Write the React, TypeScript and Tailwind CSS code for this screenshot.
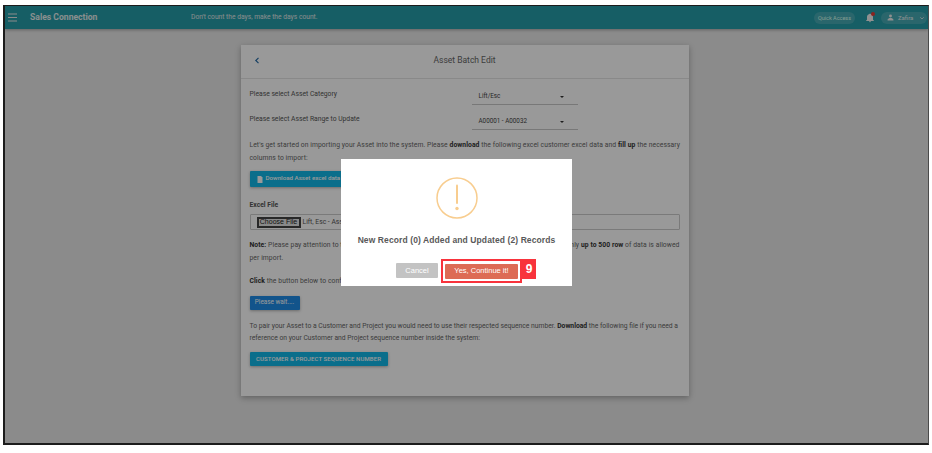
import React from "react";

function Caret() {
  return <span className="w-0 h-0 border-l-[2.5px] border-r-[2.5px] border-t-[2.5px] border-l-transparent border-r-transparent border-t-[#333]" />;
}

function SelectRow({ label, value }: { label: string; value: string }) {
  return (
    <div className="flex items-center h-[25px]">
      <div className="w-[222px] pt-[4px] text-[#555] text-[6.75px]">{label}</div>
      <div className="w-[106px] h-[25px] border-b border-[#c8c8c8] flex items-center justify-between pt-[9px] pl-[7px] pr-[14px] text-[6.3px] text-[#444]">
        <span>{value}</span>
        <Caret />
      </div>
    </div>
  );
}

export default function App() {
  return (
    <div className="w-[932px] h-[453px] bg-white pt-[5px] pl-[3px] font-['Roboto',sans-serif] overflow-hidden">
      <div className="relative w-[926px] h-[440px] border border-b-2 border-l-2 border-[#1c1c1c] border-r-[#4a4a4a] bg-[#e8e8e8] overflow-hidden flex flex-col">
        <header className="h-[23px] shrink-0 bg-[#269da8] flex items-center text-white shadow-[0_1px_3px_rgba(0,0,0,0.3)]">
          <svg width="11" height="9" viewBox="0 0 11 9" className="ml-[2px]" fill="none" stroke="#e8e8e8" strokeWidth="1">
            <path d="M1 1h9M1 4.500h9M1 8h9" />
          </svg>
          <span className="ml-[12px] text-[8.6px] font-bold text-[#e4eeee] w-[161px]">Sales Connection</span>
          <span className="text-[6.7px] text-[#e0eaea]">Don't count the days, make the days count.</span>
          <div className="ml-auto flex items-center pr-[1px]">
            <span className="h-[12px] px-[4px] rounded-full bg-white/15 text-[5.5px] leading-[12px] text-[#dfe]">Quick Access</span>
            <span className="relative ml-[11px] w-[8px] h-[10px]">
              <svg width="8" height="10" viewBox="0 0 24 28" fill="#f2f2f2"><path d="M12 27a3 3 0 0 0 3-3H9a3 3 0 0 0 3 3zM21 19v-8c0-4.500-3-8-7-9V1h-4v1c-4 1-7 4.500-7 9v8l-3 3v1h24v-1z" /></svg>
              <span className="absolute -top-[1px] right-[-1px] w-[4px] h-[4px] rounded-full bg-[#e53935]" />
            </span>
            <div className="ml-[7px] h-[12px] w-[46px] rounded-full bg-white/15 flex items-center pl-[6px] gap-[4px] text-[6px] text-[#e4eeee]">
              <svg width="7" height="7" viewBox="0 0 24 24" fill="#f0f0f0"><path d="M12 12a5 5 0 1 0 0-10 5 5 0 0 0 0 10zm0 2c-4 0-10 2-10 6v2h20v-2c0-4-6-6-10-6z" /></svg>
              <span>Zafira</span>
              <svg width="6" height="6" viewBox="0 0 24 24" fill="none" stroke="#f0f0f0" strokeWidth="3" className="ml-[2px]"><path d="M5 9l7 7 7-7" /></svg>
            </div>
          </div>
        </header>

        <main className="flex-1 flex justify-center items-start pt-[16px] pr-[4px]">
          <div className="w-[448px] h-[351px] bg-white shadow-[0_2px_6px_rgba(0,0,0,0.3)]">
            <div className="h-[34px] border-b border-[#e4e4e4] flex items-start">
              <svg width="6" height="7" viewBox="0 0 6 7" fill="none" stroke="#2a6ea8" strokeWidth="1.2" className="mt-[12px] ml-[13px]"><path d="M4.500 0.800L1.800 3.500L4.500 6.200" /></svg>
              <div className="flex-1 pr-[19px] text-center text-[8.5px] text-[#666] mt-[9px]">Asset Batch Edit</div>
            </div>

            <div className="pl-[9px] pr-[9px]">
              <div className="pt-[1px]"><SelectRow label="Please select Asset Category" value="Lift/Esc" /></div>
              <SelectRow label="Please select Asset Range to Update" value="A00001 - A00032" />

              <p className="mt-[9px] text-[6.75px] leading-[12.5px] text-[#666] tracking-[0.08px] whitespace-nowrap">
                Let's get started on importing your Asset into the system. Please <b className="text-[#333]">download</b> the following excel customer excel data and <b className="text-[#333]">fill up</b> the necessary<br />columns to import:
              </p>

              <div className="mt-[7px] w-[150px] h-[16px] bg-[#12b8e8] rounded-[1px] text-white text-[6.2px] font-medium flex items-center pl-[7px] gap-[3px] shadow-[0_1px_3px_rgba(0,0,0,0.3)]">
                <svg width="6" height="7" viewBox="0 0 12 14" fill="#fff"><path d="M1 0h7l3 3v11H1z" /></svg>
                <span>Download Asset excel data</span>
              </div>

              <div className="mt-[13px] text-[6.75px] leading-[10px] font-bold text-[#555]">Excel File</div>
              <div className="mt-[4px] h-[16px] w-[430px] border border-[#ccc] rounded-[1px] flex items-center pl-[6px] text-[6.75px] text-[#555]">
                <span className="h-[11px] w-[44px] border-2 border-[#444] bg-[#e4e4e4] text-[#222] text-[7px] whitespace-nowrap font-['Liberation_Sans',sans-serif] flex items-center justify-center">Choose File</span>
                <span className="ml-[2px]">Lift, Esc - Asset Batch Edit.xlsx</span>
              </div>

              <p className="mt-[9px] text-[6.75px] leading-[12.5px] text-[#666] tracking-[0.08px]">
                <span className="flex justify-between">
                  <span><b className="text-[#333]">Note:</b> Please pay attention to the</span>
                  <span>only <b className="text-[#333]">up to 500 row</b> of data is allowed</span>
                </span>
                <span className="block">per import.</span>
              </p>

              <p className="mt-[11px] text-[6.75px] leading-[12.5px] text-[#666] tracking-[0.08px]">
                <b className="text-[#333]">Click</b> the button below to confirm the import of your Asset data.
              </p>

              <div className="mt-[8px] w-[50px] h-[14px] bg-[#1e8ce8] rounded-[1px] text-white text-[6.4px] flex items-center justify-center shadow-[0_1px_3px_rgba(0,0,0,0.3)]">Please wait....</div>

              <p className="mt-[10px] text-[6.75px] leading-[12.5px] text-[#666] whitespace-nowrap">
                To pair your Asset to a Customer and Project you would need to use their respected sequence number. <b className="text-[#333]">Download</b> the following file if you need a<br />reference on your Customer and Project sequence number inside the system:
              </p>

              <div className="mt-[7px] w-[138px] h-[14px] bg-[#12b8e8] rounded-[1px] text-white text-[6px] font-medium flex items-center justify-center tracking-[0.1px] shadow-[0_1px_3px_rgba(0,0,0,0.3)]">CUSTOMER &amp; PROJECT SEQUENCE NUMBER</div>
            </div>
          </div>
        </main>

        <div className="absolute inset-0 bg-black/40" />

        <div className="absolute left-[336px] top-[153px] w-[231px] h-[127px] bg-white flex flex-col items-center">
          <svg width="42" height="42" viewBox="0 0 42 42" fill="none" className="mt-[18px]">
            <circle cx="21" cy="21" r="20" stroke="#f8cd8f" strokeWidth="1.5" />
            <path d="M21 8.500V26" stroke="#f8cd8f" strokeWidth="2" strokeLinecap="round" />
            <circle cx="21" cy="31.500" r="1.700" fill="#f8cd8f" />
          </svg>
          <div className="mt-[15px] text-[8.5px] font-['Liberation_Sans',sans-serif] font-bold text-[#595959] tracking-[0.1px] whitespace-nowrap">New Record (0) Added and Updated (2) Records</div>
          <div className="absolute left-[55px] top-[104px] w-[42px] h-[15px] bg-[#c3c3c3] rounded-[1px] text-white text-[7.5px] font-['Liberation_Sans',sans-serif] flex items-center justify-center">Cancel</div>
          <div className="absolute left-[100px] top-[100px] w-[81px] h-[24px] border-2 border-[#f8333c] flex items-center justify-center">
            <div className="w-[73px] h-[15px] bg-[#dd6b55] rounded-[1px] text-white text-[7.5px] font-['Liberation_Sans',sans-serif] flex items-center justify-center">Yes, Continue it!</div>
          </div>
          <div className="absolute left-[181px] top-[100px] w-[14px] h-[20px] bg-[#f8333c] text-white font-['Liberation_Sans',sans-serif] font-bold text-[12px] flex items-center justify-center">9</div>
        </div>
      </div>
    </div>
  );
}
